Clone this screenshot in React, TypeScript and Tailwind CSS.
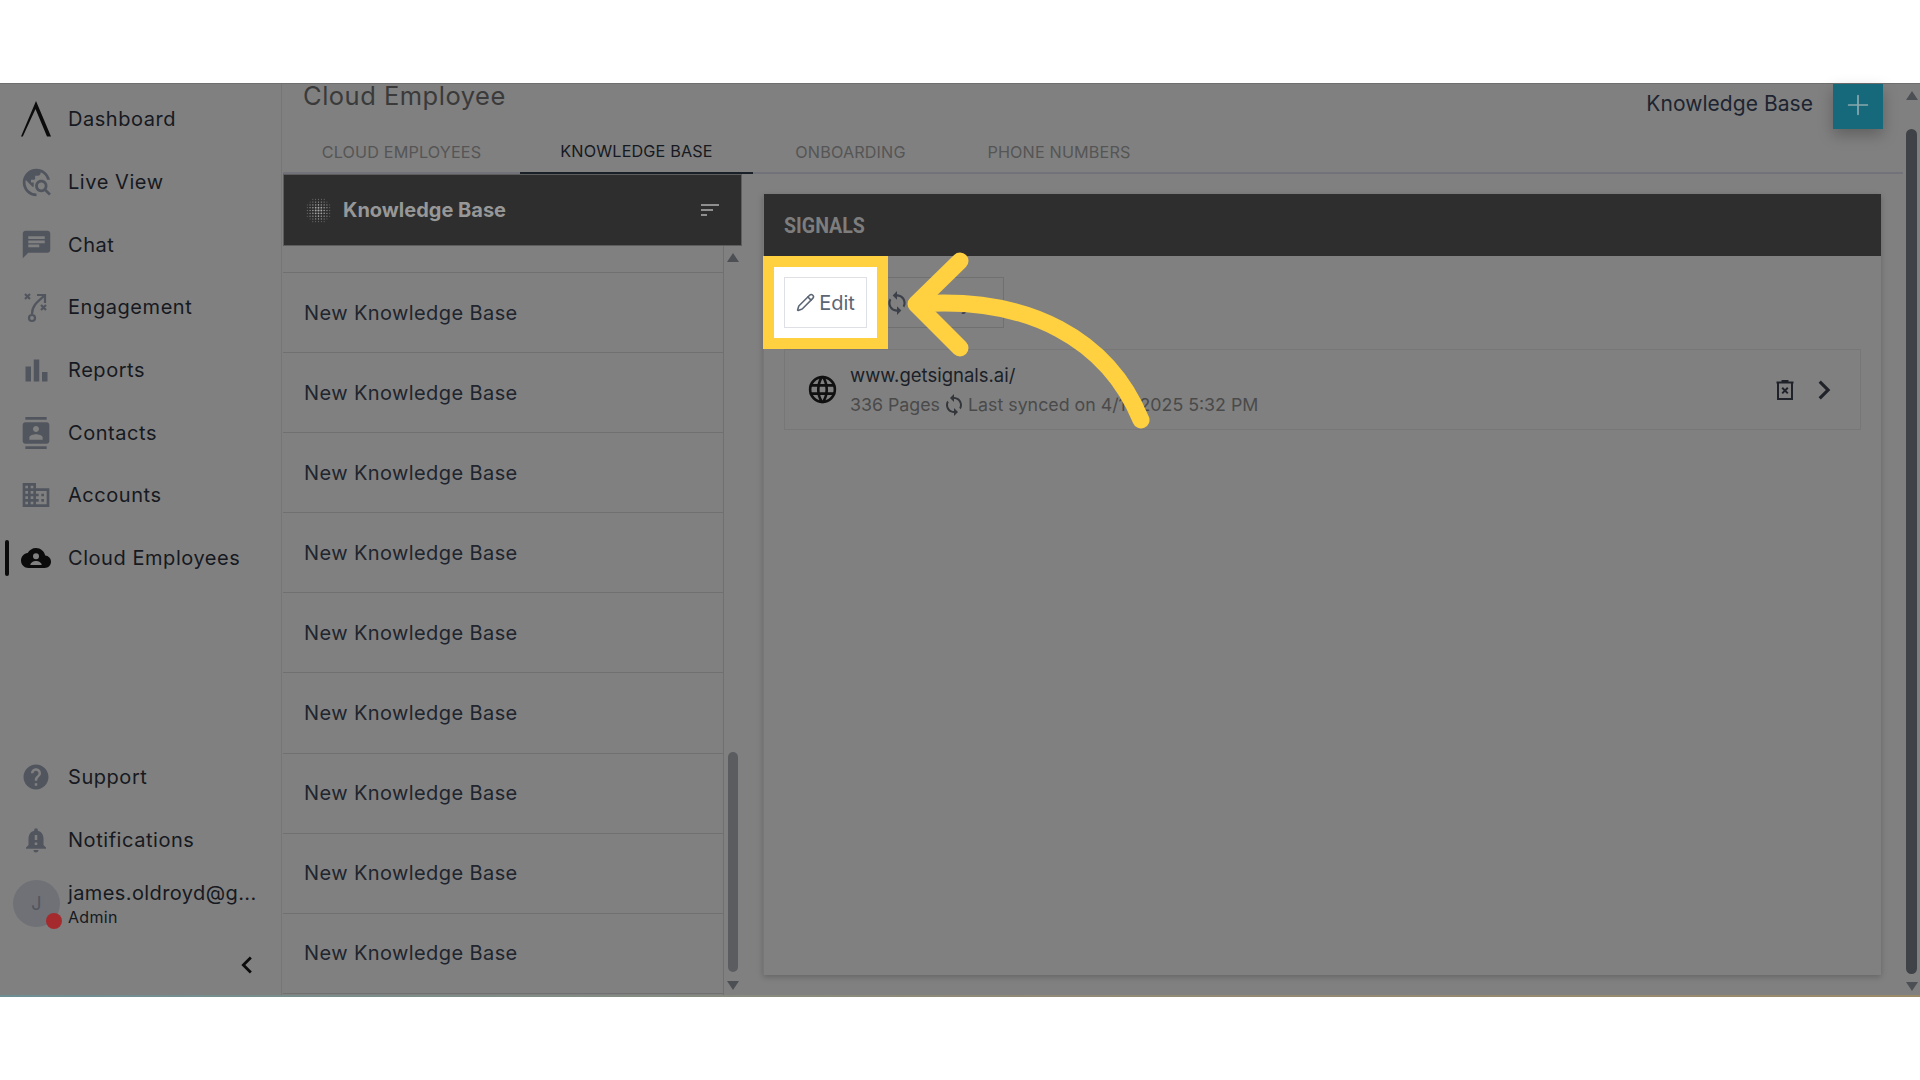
import React from "react";
import {
  MdTravelExplore, MdChat, MdBarChart, MdContacts, MdDomain, MdHelp,
  MdNotificationImportant, MdSync, MdSort, MdChevronRight, MdChevronLeft,
} from "react-icons/md";
import { TbWorld } from "react-icons/tb";
import { LuPlus, LuPencil } from "react-icons/lu";

const LogoIcon = () => (
  <svg viewBox="0 0 30 36" className="w-[30px] h-[36px]">
    <path d="M15 0 L30 35.5 L26 35.5 L14.5 8 L1.8 35.5 L0 35.5 Z" fill="#0b0b0b" />
  </svg>
);
const EngageIcon = () => (
  <svg viewBox="0 0 24 32" className="w-[24px] h-[32px]" fill="none" stroke="#51555e" strokeWidth="2.2">
    <circle cx="8" cy="27" r="3" />
    <path d="M8 23c0-8 5-12 12-18" />
    <path d="M13 4h8v8" />
    <path d="M1 3l5 5M6 3l-5 5" />
    <path d="M17 14l5 5M22 14l-5 5" />
  </svg>
);
const CloudPerson = () => (
  <svg viewBox="0 0 24 24" className="w-[30px] h-[30px]">
    <path fill="#0b0b0b" d="M19.35 10.04C18.67 6.59 15.64 4 12 4 9.11 4 6.6 5.64 5.35 8.04 2.34 8.36 0 10.91 0 14c0 3.31 2.69 6 6 6h13c2.76 0 5-2.24 5-5 0-2.64-2.05-4.78-4.65-4.96z" />
    <circle cx="12" cy="10.6" r="2.4" fill="#808080" />
    <path fill="#808080" d="M7.5 17.5c0-2 2.6-3.2 4.5-3.2s4.5 1.2 4.5 3.2z" />
  </svg>
);
const TrashX = () => (
  <svg viewBox="0 0 18 20" className="w-[18px] h-[20px]" fill="none" stroke="#1f2329" strokeWidth="2">
    <path d="M0.5 2.5h17M5.5 1h7" />
    <path d="M2 2.5V19h14V2.5" />
    <path d="M6.2 7.8l5.6 5.6M11.8 7.8l-5.6 5.6" />
  </svg>
);
const DotsIcon = () => {
  const dots: React.ReactNode[] = [];
  for (let y = -4; y <= 4; y++) {
    for (let x = -4; x <= 4; x++) {
      const d = Math.sqrt(x * x + y * y);
      if (d > 4.6) continue;
      dots.push(<circle key={`${x}_${y}`} cx={12 + x * 2.7} cy={12 + y * 2.7} r={Math.max(0.4, 1.05 - d * 0.15)} fill="#a6a6a6" />);
    }
  }
  return <svg viewBox="0 0 24 24" className="w-[25px] h-[25px]">{dots}</svg>;
};
const Tri = ({ down }: { down?: boolean }) => (
  <svg viewBox="0 0 12 9" className="w-[12px] h-[9px]">
    <path d={down ? "M0 0h12L6 9z" : "M6 0l6 9H0z"} fill="#4c4f54" />
  </svg>
);

const nav = [
  { label: "Dashboard", icon: <LogoIcon /> },
  { label: "Live View", icon: <MdTravelExplore size={33} color="#51555e" /> },
  { label: "Chat", icon: <MdChat size={33} color="#51555e" /> },
  { label: "Engagement", icon: <EngageIcon /> },
  { label: "Reports", icon: <MdBarChart size={33} color="#51555e" /> },
  { label: "Contacts", icon: <MdContacts size={32} color="#51555e" /> },
  { label: "Accounts", icon: <MdDomain size={32} color="#51555e" /> },
  { label: "Cloud Employees", icon: <CloudPerson />, active: true },
];

function NavRow({ label, icon, active }: { label: string; icon: React.ReactNode; active?: boolean }) {
  return (
    <div className="flex items-center h-[62.7px]">
      <div className={`ml-[5px] w-[4px] h-[36px] rounded-full ${active ? "bg-[#0b0b0b]" : ""}`} />
      <div className="ml-[9px] w-[36px] flex justify-center">{icon}</div>
      <span className="ml-[14px] text-[20px] tracking-[0.55px] text-[#16191f]">{label}</span>
    </div>
  );
}

const tabs = [
  { label: "CLOUD EMPLOYEES", w: "w-[237px]" },
  { label: "KNOWLEDGE BASE", w: "w-[233px]", active: true },
  { label: "ONBOARDING", w: "w-[195px]" },
  { label: "PHONE NUMBERS", w: "w-[222px]" },
];

export default function App() {
  return (
    <div className="w-[1920px] h-[1080px] bg-white overflow-hidden flex flex-col font-['Inter',sans-serif]">
      <div className="h-[83px] shrink-0 bg-white" />
      <div className="relative h-[914px] shrink-0 bg-[#808080] flex flex-col border-t border-[#6f6f6f]">
        <div className="flex flex-1 min-h-0">
          {/* sidebar */}
          <aside className="w-[282px] shrink-0 border-r border-[#767676] flex flex-col pt-[4px]">
            {nav.map((n) => (
              <NavRow key={n.label} {...n} />
            ))}
            <div className="flex-1" />
            <NavRow label="Support" icon={<MdHelp size={30} color="#51555e" />} />
            <NavRow label="Notifications" icon={<MdNotificationImportant size={30} color="#51555e" />} />
            <div className="flex items-start h-[55px] mt-[9px] pl-[13px]">
              <div className="relative w-[47px] h-[47px] rounded-full bg-[#6f7176] flex items-center justify-center text-[18px] text-[#51555e]">
                J
                <span className="absolute right-[-2px] bottom-[-2px] w-[16px] h-[16px] rounded-full bg-[#a52a2e]" />
              </div>
              <div className="ml-[8px] flex flex-col">
                <span className="text-[20px] leading-[26px] tracking-[0.4px] text-[#16191f] whitespace-nowrap">james.oldroyd@g...</span>
                <span className="text-[16px] leading-[22px] tracking-[0.3px] text-[#16191f]">Admin</span>
              </div>
            </div>
            <div className="h-[60px] flex justify-end items-center pr-[17px]">
              <MdChevronLeft size={34} color="#0b0b0b" />
            </div>
          </aside>

          {/* main */}
          <div className="flex-1 min-w-0 flex flex-col">
            <div className="h-[47px] shrink-0 flex items-start justify-between">
              <div className="ml-[21px] text-[25.5px] leading-[23px] tracking-[0.5px] text-[#3a3a3a]">Cloud Employee</div>
              <div className="flex items-start">
                <span className="mt-[6px] mr-[20px] text-[21px] leading-[28px] tracking-[0.05px] text-[#1d2430]">Knowledge Base</span>
                <button className="w-[50px] h-[45px] mr-[20px] pb-[4px] bg-[#16697a] flex items-center justify-center shadow-[0_6px_14px_rgba(0,0,0,0.25)]">
                  <LuPlus size={32} strokeWidth={1.3} color="#8aa8ae" />
                </button>
              </div>
            </div>
            <div className="h-[43px] shrink-0 flex border-b-2 border-[#72727a] ml-[1px]">
              {tabs.map((t) => (
                <div key={t.label} className={`${t.w} h-[43px] flex items-center justify-center text-[16.2px] tracking-[0.15px] ${t.active ? "text-[#16191f] border-b-2 border-[#1a2028]" : "text-[#555555]"}`}>
                  {t.label}
                </div>
              ))}
            </div>
            <div className="flex-1 min-h-0 flex">
              {/* list panel */}
              <section className="w-[459px] ml-[1px] shrink-0 flex flex-col">
                <div className="h-[72px] shrink-0 bg-[#2e2e2e] flex items-center pl-[22px] pr-[19px] border border-[#5d5d5d]">
                  <DotsIcon />
                  <span className="ml-[12px] text-[20px] font-bold tracking-[0px] text-[#979797]">Knowledge Base</span>
                  <span className="flex-1" />
                  <MdSort size={24} color="#8f8f8f" />
                </div>
                <div className="flex-1 min-h-0 flex">
                  <div className="w-[441px] border-r border-[#707070] flex flex-col">
                    <div className="h-[27px] shrink-0 border-b border-[#707070]" />
                    {Array.from({ length: 9 }).map((_, i) => (
                      <div key={i} className="h-[80.1px] shrink-0 border-b border-[#707070] flex items-center pl-[21px] text-[20px] tracking-[0.4px] text-[#20252e]">
                        New Knowledge Base
                      </div>
                    ))}
                  </div>
                  <div className="flex-1 flex flex-col items-center pt-[7px] pb-[5px]">
                    <Tri />
                    <div className="flex-1" />
                    <div className="w-[10px] h-[220px] rounded-full bg-[#5a5c60]" />
                    <div className="h-[9px]" />
                    <Tri down />
                  </div>
                </div>
              </section>
              {/* card */}
              <section className="ml-[21px] mt-[20px] mb-[20px] w-[1118px] shrink-0 flex flex-col shadow-[0_2px_6px_rgba(0,0,0,0.22)] border-l border-[#777777]">
                <div className="h-[62px] shrink-0 bg-[#2e2e2e] flex items-center pl-[20px]">
                  <span className="text-[22px] font-bold font-['Roboto',sans-serif] text-[#7d7d7d] origin-left scale-x-[0.89]">SIGNALS</span>
                </div>
                <div className="flex mt-[21px] ml-[20px] h-[51px] shrink-0">
                  <button className="relative z-10 w-[83px] h-[51px] bg-white border border-[#dfe0e6] flex items-center justify-center gap-[4px] text-[20px] text-[#5c6675] shadow-[0_0_0_10px_#ffffff,0_0_0_21px_#ffd040]">
                    <LuPencil size={19} color="#5c6675" strokeWidth={2} />
                    Edit
                  </button>
                  <button className="w-[137px] h-[51px] border border-[#707070] flex items-center pl-[16px] gap-[4px] text-[20px] text-[#3c4048]">
                    <MdSync size={26} color="#3c4048" />
                    Re-Sync
                  </button>
                </div>
                <div className="mt-[21px] mx-[20px] h-[81px] shrink-0 border border-[#777777] flex items-center pl-[21px] pr-[17px]">
                  <TbWorld size={33} color="#111111" strokeWidth={1.9} />
                  <div className="ml-[11px] flex flex-col">
                    <span className="text-[18.5px] leading-[30px] text-[#1a1f28]">www.getsignals.ai/</span>
                    <span className="flex items-center text-[17.8px] leading-[30px] text-[#4a4a4a]">
                      336 Pages
                      <MdSync size={24} color="#33363b" className="mx-[2px]" />
                      Last synced on 4/11/2025 5:32 PM
                    </span>
                  </div>
                  <div className="flex-1" />
                  <TrashX />
                  <MdChevronRight size={38} color="#1f2329" className="ml-[11px]" />
                </div>
              </section>
            </div>
          </div>
          {/* page scrollbar */}
          <div className="w-[17px] shrink-0 flex flex-col items-center pt-[7px] pb-[4px]">
            <Tri />
            <div className="w-[11px] h-[846px] mt-[29px] rounded-full bg-[#3f4347]" />
            <div className="h-[8px]" />
            <Tri down />
          </div>
        </div>
        <div className="h-[2px] shrink-0 bg-gradient-to-r from-[#6d8f94] via-[#8f8a78] to-[#9a8a6a]" />

        {/* annotation arrow */}
        <svg viewBox="900 240 260 200" className="absolute left-[900px] top-[156px] w-[260px] h-[200px] pointer-events-none z-20" fill="none" stroke="#ffd040" strokeWidth="17" strokeLinecap="round" strokeLinejoin="round">
          <path d="M960 261 L916 304 L960 348" />
          <path d="M1141 420 C1108 340 1030 296 918 304" />
        </svg>
      </div>
      <div className="flex-1 bg-white" />
    </div>
  );
}
